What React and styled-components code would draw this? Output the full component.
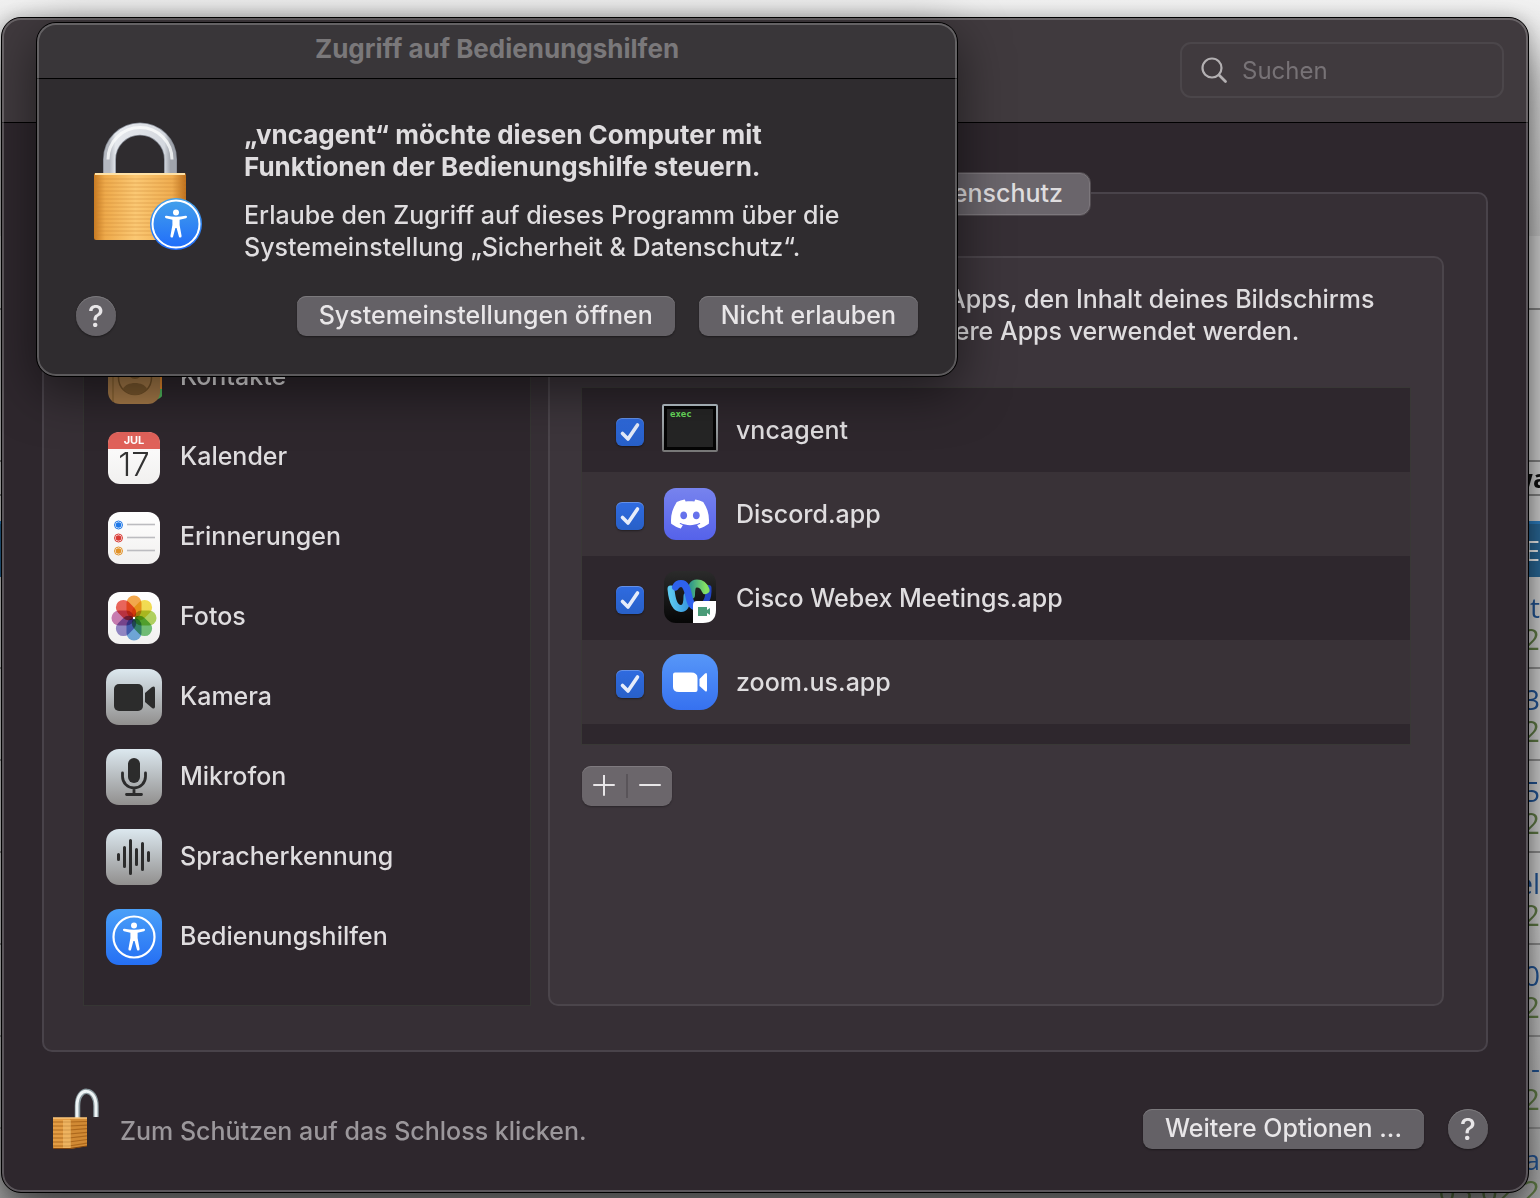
import React, { useState } from "react";
import styled, { createGlobalStyle } from "styled-components";
import { SiDiscord } from "react-icons/si";

const GlobalStyle = createGlobalStyle`
  * { box-sizing: border-box; }
  body {
    margin: 0;
    background: #dcdcdc;
    color: #dfdddf;
    font-family: Inter, "Liberation Sans", sans-serif;
    font-size: 25px;
    font-weight: 500;
    line-height: 32px;
  }
  button, input { font: inherit; color: inherit; }
  h1, h2, p, ul { margin: 0; padding: 0; }
  ul { list-style: none; }
  svg { display: block; }
`;

const Desktop = styled.div`
  position: relative;
  min-height: 100vh;
  overflow: hidden;
  padding: 17px 11px 5px 1px;
`;

/* ---------- page lying behind the windows ---------- */

const BackPage = styled.div`
  position: absolute;
  inset: 0;
  overflow: hidden;
  padding-top: 236px;
  background: linear-gradient(#f2f2f2 0, #cfcfcf 236px, #dedede 236px, #dedede 900px, #b4b4b4 100%);
  font-family: "Open Sans", "Noto Sans", sans-serif;
  font-size: 28px;
  text-align: right;
`;

const BackBand = styled.div`
  height: ${(p) => p.$height}px;
  margin-right: -8px;
  border-bottom: 2px solid #8a8a8a;
  color: #111;
  font-size: 25px;
  font-weight: 700;
`;

const BackSelected = styled.div`
  height: 56px;
  margin-top: 25px;
  padding-top: 10px;
  border-top: 3px solid #2f86cc;
  background: #2c6e9f;
  color: #fff;
`;

const BackRow = styled.div`
  display: flex;
  flex-direction: column;
  height: 92px;
  padding-top: 14px;
  border-bottom: 2px solid #959595;
  color: #24599c;
`;

const BackDate = styled.span`
  color: #66834a;
  font-size: 30px;
`;

/* ---------- preferences window ---------- */

const Window = styled.main`
  position: relative;
  display: flex;
  flex-direction: column;
  min-height: calc(100vh - 22px);
  border: 1px solid #000;
  border-radius: 20px;
  background: #2e272d;
  box-shadow: 0 30px 50px rgba(0, 0, 0, 0.6), 0 0 16px rgba(0, 0, 0, 0.2);
  overflow: clip;

  &::after {
    content: "";
    position: absolute;
    inset: 0;
    border: 2px solid rgba(255, 255, 255, 0.22);
    border-radius: 19px;
    pointer-events: none;
  }
`;

const Toolbar = styled.header`
  display: flex;
  justify-content: flex-end;
  height: 105px;
  padding: 24px;
  border-bottom: 1px solid #000;
  background: #403a3e;
`;

const Search = styled.label`
  display: flex;
  align-items: center;
  gap: 14px;
  width: 324px;
  height: 56px;
  padding: 0 18px;
  border: 2px solid #4b464a;
  border-radius: 11px;

  input {
    min-width: 0;
    flex: 1;
    padding: 2px 0 0;
    border: 0;
    outline: 0;
    background: transparent;
    font-size: 24px;
    font-weight: 400;
  }
  input::placeholder { color: #777276; opacity: 1; }
`;

const Content = styled.div`
  display: flex;
  flex: 1;
  flex-direction: column;
  padding: 49px 40px 36px;
`;

const Tabs = styled.nav`
  position: relative;
  display: flex;
  justify-content: flex-end;
  align-self: center;
  width: 652px;
  border: 1px solid #514b50;
  border-radius: 11px;
  background: #4a4449;
`;

const Tab = styled.button`
  height: 42px;
  padding: 0 26px 2px;
  border: 1px solid ${(p) => (p.$active ? "#7c777c" : "transparent")};
  border-radius: 10px;
  background: ${(p) => (p.$active ? "#6a656b" : "transparent")};
`;

const Panel = styled.section`
  display: flex;
  flex: 1;
  gap: 17px;
  margin-top: -24px;
  padding: 62px 42px 44px 39px;
  border: 2px solid #49434a;
  border-radius: 10px;
  background: #362f35;
`;

const Categories = styled.ul`
  display: flex;
  flex: 0 0 448px;
  flex-direction: column;
  justify-content: flex-end;
  padding-bottom: 28px;
  border: 1px solid #363634;
  background: #2e272d;
`;

const Category = styled.li`
  display: flex;
  align-items: center;
  gap: 18px;
  height: 80px;
  padding-left: 22px;
`;

const CategoryName = styled.span`
  padding-bottom: 2px;
`;

const Details = styled.div`
  flex: 1;
  min-width: 0;
  padding: 25px 32px;
  border: 2px solid #4b454b;
  border-radius: 10px;
  background: #3c353b;
`;

const Hint = styled.p`
  padding-left: 328px;
  text-indent: 38px;
`;

const AppList = styled.ul`
  margin-top: 41px;
  padding-bottom: 20px;
  outline: 1px solid #393836;
  background: #2e272d;
`;

const AppRow = styled.li`
  height: 84px;
  background: ${(p) => (p.$shaded ? "#393237" : "transparent")};

  label {
    display: flex;
    align-items: center;
    gap: 18px;
    height: 84px;
    padding-left: 34px;
  }
`;

const Tick = styled.span`
  display: grid;
  margin-top: 4px;

  input, svg { grid-area: 1 / 1; }
  svg { pointer-events: none; visibility: hidden; }
  input {
    width: 28px;
    height: 28px;
    margin: 0;
    appearance: none;
    border-radius: 6px;
    background: #5f5a60;
  }
  input:checked {
    background: linear-gradient(#2f6be0, #2860c8);
    box-shadow: inset 0 1px 0 rgba(255, 255, 255, 0.25), 0 1px 2px rgba(0, 0, 0, 0.4);
  }
  input:checked + svg { visibility: visible; }
`;

const Stepper = styled.div`
  display: flex;
  align-items: center;
  width: 90px;
  height: 40px;
  margin-top: 22px;
  border-radius: 9px;
  background: #6b666b;
  box-shadow: inset 0 1px 0 #7f7a7f, 0 1px 2px rgba(0, 0, 0, 0.3);
`;

const StepButton = styled.button`
  display: grid;
  place-items: center;
  flex: 1;
  height: 24px;
  padding: 0;
  border: 0;
  background: transparent;

  & + & { border-left: 2px solid #595459; }
`;

const Footer = styled.footer`
  display: flex;
  align-items: center;
  padding: 0 40px 40px 48px;
`;

const LockNote = styled.p`
  flex: 1;
  padding: 22px 0 0 18px;
  color: #9b979b;
`;

const PushButton = styled.button`
  height: 40px;
  padding: 0 22px 2px;
  border: 0;
  border-radius: 9px;
  background: #646166;
  box-shadow: inset 0 1px 0 #7b797c, 0 1px 2px rgba(0, 0, 0, 0.4);
  color: #e8e6e8;
`;

const HelpButton = styled.button`
  width: 40px;
  height: 40px;
  padding: 0;
  border: 0;
  border-radius: 50%;
  background: #646166;
  box-shadow: inset 0 1px 0 #7b797c, 0 1px 2px rgba(0, 0, 0, 0.4);
  color: #e8e6e8;
  font-size: 30px;
`;

const FooterActions = styled.div`
  display: flex;
  gap: 24px;
  padding-top: 18px;
`;

/* ---------- access dialog ---------- */

const Dialog = styled.div`
  position: absolute;
  top: 22px;
  left: 36px;
  width: 922px;
  max-width: calc(100vw - 48px);
  border: 1px solid #000;
  border-radius: 20px;
  background: #2f2c2f;
  box-shadow: 0 14px 50px rgba(0, 0, 0, 0.5);
  overflow: clip;

  &::after {
    content: "";
    position: absolute;
    inset: 0;
    border: 2px solid rgba(255, 255, 255, 0.22);
    border-radius: 19px;
    pointer-events: none;
  }
`;

const DialogTitle = styled.h1`
  height: 56px;
  padding-top: 10px;
  border-bottom: 1px solid #000;
  background: #393639;
  color: #7a787a;
  font-size: 26px;
  line-height: 32px;
  font-weight: 700;
  text-align: center;
`;

const DialogBody = styled.div`
  display: flex;
  gap: 38px;
  padding: 40px 40px 0 57px;
`;

const DialogText = styled.div`
  display: flex;
  flex: 1;
  flex-direction: column;
  gap: 16px;
`;

const DialogHeading = styled.h2`
  font-size: 26px;
  line-height: 32px;
  font-weight: 700;
`;

const DialogActions = styled.div`
  display: flex;
  gap: 24px;
  padding: 33px 39px 40px;

  ${HelpButton} { margin-right: auto; }
`;

/* ---------- drawings ---------- */

const Person = () => (
  <g>
    <circle cx="0" cy="-11.5" r="3" />
    <path d="M-11-7.7 Q-11.3-6 -10-5.8 L-3.6-4.3 L-3.6 1 L-5.6 12 Q-5.6 13.6 -4.3 13.6 Q-3.2 13.6 -2.9 12.4 L-.6 4 H.6 L2.9 12.4 Q3.2 13.6 4.3 13.6 Q5.6 13.6 5.6 12 L3.6 1 V-4.3 L10-5.8 Q11.3-6 11-7.7 Q10.5-8.5 9.5-8.2 Q0-6.2 -9.5-8.2 Q-10.5-8.5 -11-7.7Z" />
  </g>
);

const BigLock = () => (
  <svg width="112" height="132" viewBox="0 0 112 132" aria-hidden="true">
    <defs>
      <linearGradient id="shackle" x1="0" x2="1">
        <stop offset="0" stopColor="#b4b8c0" />
        <stop offset=".1" stopColor="#e4e7ec" />
        <stop offset=".5" stopColor="#dfe2e7" />
        <stop offset=".9" stopColor="#d3d7de" />
        <stop offset="1" stopColor="#a0a4ac" />
      </linearGradient>
      <linearGradient id="brass" x1="0" x2="1">
        <stop offset="0" stopColor="#c77a22" />
        <stop offset=".12" stopColor="#eeaa4b" />
        <stop offset=".45" stopColor="#fbc873" />
        <stop offset=".85" stopColor="#efad50" />
        <stop offset="1" stopColor="#bd6f1b" />
      </linearGradient>
      <linearGradient id="badge" x1="0" x2="0" y1="0" y2="1">
        <stop offset="0" stopColor="#45a3ea" />
        <stop offset="1" stopColor="#1f6bfb" />
      </linearGradient>
    </defs>
    <path d="M15.500 54V40.500A30.500 30.500 0 0 1 76.500 40.500V54" fill="none" stroke="#858a94" strokeWidth="13" />
    <path d="M15.500 54V40.500A30.500 30.500 0 0 1 76.500 40.500V54" fill="none" stroke="url(#shackle)" strokeWidth="11.500" />
    <path d="M14 40.500A32 32 0 0 1 78 40.500" fill="none" stroke="#fbfcfd" strokeWidth="3" opacity=".8" />
    <rect x="0" y="54" width="92" height="67" rx="2" fill="url(#brass)" />
    {Array.from({ length: 15 }, (_, i) => (
      <path key={i} d={`M0 ${60 + i * 4}H92`} stroke="#c98534" strokeOpacity=".4" />
    ))}
    <path d="M1 55H91" stroke="#ffe2a6" strokeWidth="2" />
    <circle cx="82" cy="105" r="26" fill="url(#badge)" />
    <circle cx="82" cy="105" r="23.500" fill="none" stroke="#fff" strokeWidth="2" />
    <g transform="translate(82 105)" fill="#fff"><Person /></g>
  </svg>
);

const SmallLock = () => (
  <svg width="52" height="64" viewBox="0 0 52 64" aria-hidden="true">
    <g transform="translate(1 -1)">
      <path d="M26.500 35V19C26.500 -1 45 0 45 19V30" fill="none" stroke="#87979c" strokeWidth="5.500" />
      <path d="M26 35V19C26 -1 45 0 45 19V30" fill="none" stroke="#eef4f5" strokeWidth="3" />
      <path d="M2 31H19V62H4Q2 62 2 60Z" fill="#e39c43" />
      <path d="M19 31H36V59L19 62Z" fill="#d18a34" />
      {Array.from({ length: 7 }, (_, i) => (
        <path key={i} d={`M2 ${35 + i * 4}H18L36 ${34.5 + i * 3.6}`} fill="none" stroke="#9f5c16" strokeWidth="1.200" opacity=".75" />
      ))}
      <path d="M12 33H20V61H12Z" fill="#ffd68a" opacity=".4" />
      <path d="M2 31H36" stroke="#fbc679" strokeWidth="1.500" />
      <path d="M2 61.500H19L36 59" fill="none" stroke="#7c420d" />
    </g>
  </svg>
);

const SearchIcon = () => (
  <svg width="28" height="28" viewBox="0 0 28 28" fill="none" stroke="#b3b0b2" strokeWidth="2.200" strokeLinecap="round" aria-hidden="true">
    <circle cx="12" cy="12" r="9.500" />
    <path d="M19 19L25.500 25.500" strokeWidth="2.800" />
  </svg>
);

const IconBox = ({ children }) => (
  <svg width="56" height="56" viewBox="0 0 56 56" aria-hidden="true">{children}</svg>
);

const Gradient = ({ id, from, to }) => (
  <linearGradient id={id} x1="0" x2="0" y1="0" y2="1">
    <stop offset="0" stopColor={from} />
    <stop offset="1" stopColor={to} />
  </linearGradient>
);

const Silver = ({ id, children }) => (
  <IconBox>
    <defs><Gradient id={id} from="#dce8ef" to="#918f8e" /></defs>
    <rect width="56" height="56" rx="13" fill={`url(#${id})`} />
    {children}
  </IconBox>
);

const White = ({ id, children }) => (
  <IconBox>
    <defs><Gradient id={id} from="#fff" to="#f1f0ef" /></defs>
    <rect x="2" y="3" width="52" height="52" rx="12" fill={`url(#${id})`} />
    {children}
  </IconBox>
);

const ContactsIcon = () => (
  <IconBox>
    <rect x="42" y="5" width="15" height="14" rx="3" fill="#e2e2e2" />
    <rect x="42" y="16" width="15" height="14" fill="#59a9dc" />
    <rect x="42" y="28" width="15" height="12" fill="#e58a2e" />
    <path d="M42 40H57V44Q57 49 50 51H42Z" fill="#50b85c" />
    <rect x="2" y="3" width="52" height="52" rx="12" fill="#a77b49" />
    <path d="M7 5V53" stroke="#85602f" strokeOpacity=".6" strokeWidth="2" />
    <circle cx="29" cy="29" r="16.500" fill="none" stroke="#755329" strokeWidth="1.500" />
    <circle cx="29" cy="23" r="7" fill="#7c592e" />
    <path d="M17 40C20 32 38 32 41 40Q35 46 29 46T17 40Z" fill="#7c592e" />
  </IconBox>
);

const CalendarIcon = () => (
  <White id="calendar">
    <path d="M2 20V15Q2 3 14 3H42Q54 3 54 15V20Z" fill="#e0625a" />
    <text x="28" y="15" textAnchor="middle" fontSize="11" fontWeight="700" fill="#fff">JUL</text>
    <text x="28" y="47" textAnchor="middle" fontSize="33" fontWeight="300" fill="#333">17</text>
  </White>
);

const RemindersIcon = () => (
  <White id="reminders">
    {[["#1f78e8", 16], ["#d93a34", 29], ["#e29228", 42]].map(([color, y]) => (
      <g key={y}>
        <circle cx="12.500" cy={y} r="2.800" fill={color} />
        <circle cx="12.500" cy={y} r="4" fill="none" stroke={color} />
        <path d={`M21 ${y - 0.5}H49`} stroke="#bcbcc0" strokeWidth="1.600" />
      </g>
    ))}
  </White>
);

const PETALS = ["#f39a2e", "#f2d935", "#a7cf45", "#5dba63", "#5b9fdd", "#8577c2", "#c36aa8", "#e94b3f"];

const PhotosIcon = () => (
  <White id="photos">
    {PETALS.map((color, i) => (
      <rect key={color} x="20.500" y="6.500" width="15" height="22.500" rx="7.500" fill={color} fillOpacity=".85"
        transform={`rotate(${i * 45} 28 29)`} style={{ mixBlendMode: "multiply" }} />
    ))}
    <circle cx="28" cy="29" r="1.200" fill="#fff" />
  </White>
);

const CameraIcon = () => (
  <Silver id="camera">
    <g fill="#2c2c2c">
      <rect x="8" y="15" width="29" height="27" rx="5" />
      <path d="M39 24L46 18Q49 16.500 49 19.500V37.500Q49 40.500 46 39L39 33Z" />
    </g>
  </Silver>
);

const MicrophoneIcon = () => (
  <Silver id="microphone">
    <rect x="22" y="9" width="12" height="25" rx="6" fill="#2c2c2c" />
    <path d="M16.500 24V27.500A11.500 11.500 0 0 0 39.500 27.500V24M28 39V45M20.500 45.500H35.500" fill="none" stroke="#2c2c2c" strokeWidth="2.800" strokeLinecap="round" />
  </Silver>
);

const SpeechIcon = () => (
  <Silver id="speech">
    <path d="M12.500 25.500V30.500M18.500 18.500V37.500M24.500 11.500V44.500M30.500 20.500V35.500M36.500 14.500V40.500M42.500 23.500V31.500" stroke="#2c2c2c" strokeWidth="3" strokeLinecap="round" />
  </Silver>
);

const AccessibilityIcon = () => (
  <IconBox>
    <defs><Gradient id="access" from="#4aa0f8" to="#256ff4" /></defs>
    <rect width="56" height="56" rx="13" fill="url(#access)" />
    <circle cx="28" cy="28" r="20.500" fill="none" stroke="#fff" strokeWidth="2.200" />
    <g transform="translate(28 28)" fill="#fff"><Person /></g>
  </IconBox>
);

const ExecIcon = () => (
  <IconBox>
    <defs><Gradient id="frame" from="#bcc8cf" to="#777" /></defs>
    <rect y="2" width="56" height="48" rx="2" fill="url(#frame)" />
    <rect x="2" y="4" width="52" height="44" fill="#050505" />
    <rect x="5" y="7" width="46" height="38" fill="#252525" />
    <text x="8" y="15" fontFamily="DejaVu Sans Mono, monospace" fontSize="9" fontWeight="700" fill="#6be05f">exec</text>
  </IconBox>
);

const DiscordIcon = () => (
  <IconBox>
    <defs><Gradient id="discord" from="#7783ee" to="#5562ea" /></defs>
    <rect x="2" y="2" width="52" height="52" rx="12" fill="url(#discord)" />
    <SiDiscord x="9" y="9" size="38" color="#fff" />
  </IconBox>
);

const WebexIcon = () => (
  <IconBox>
    <defs>
      <Gradient id="webex" from="#2b2b2b" to="#060606" />
      <linearGradient id="webexCyan" x1="0" x2="1">
        <stop offset="0" stopColor="#5cc8ef" />
        <stop offset="1" stopColor="#3a9be0" />
      </linearGradient>
      <linearGradient id="webexGreen" x1="0" x2="1">
        <stop offset="0" stopColor="#329a8b" />
        <stop offset="1" stopColor="#84e064" />
      </linearGradient>
    </defs>
    <rect x="2" y="1" width="52" height="52" rx="12" fill="url(#webex)" />
    <g fill="none" strokeWidth="8" strokeLinecap="round">
      <path d="M46.500 18C47 29 43 36 37 36" stroke="#2346c4" strokeWidth="6" />
      <path d="M29 25C29 16 31 13.500 35 13.500C40 13.500 42 16 43.500 20" stroke="url(#webexGreen)" />
      <path d="M9 19C10 30 13 38.500 19 38.500C24 38.500 25 31 25 26" stroke="url(#webexCyan)" strokeWidth="7" />
      <path d="M13.500 17C15 14 17 13.500 19 13.500C29 13.500 24 36 34 37" stroke="#2e62ed" strokeWidth="7" />
    </g>
    <path d="M31 53V35Q31 31 35 31H54V40Q54 53 41 53Z" fill="#fff" />
    <path d="M36 37H45V40L48 38V45L45 43V46H36Z" fill="#4a9c78" />
  </IconBox>
);

const ZoomIcon = () => (
  <IconBox>
    <defs><Gradient id="zoom" from="#5797f8" to="#3671f0" /></defs>
    <rect width="56" height="56" rx="18" fill="url(#zoom)" />
    <path d="M11 20.500Q11 18.500 13 18.500H29Q35.500 18.500 35.500 24V36Q35.500 38 33.500 38H17Q11 38 11 33Z" fill="#fff" />
    <path d="M37.500 25L43 19.500Q45 18 45 20.500V36Q45 38.500 43 37L37.500 32Z" fill="#fff" />
  </IconBox>
);

const CATEGORIES = [
  ["Kontakte", ContactsIcon],
  ["Kalender", CalendarIcon],
  ["Erinnerungen", RemindersIcon],
  ["Fotos", PhotosIcon],
  ["Kamera", CameraIcon],
  ["Mikrofon", MicrophoneIcon],
  ["Spracherkennung", SpeechIcon],
  ["Bedienungshilfen", AccessibilityIcon],
];

const APPS = [
  ["vncagent", ExecIcon],
  ["Discord.app", DiscordIcon],
  ["Cisco Webex Meetings.app", WebexIcon],
  ["zoom.us.app", ZoomIcon],
];

const BACK_ROWS = ["2t", "3", "a5", "el", "00", "-", "a"];

function AppEntry({ name, icon: Icon, shaded }) {
  const [allowed, setAllowed] = useState(true);
  return (
    <AppRow $shaded={shaded}>
      <label>
        <Tick>
          <input type="checkbox" checked={allowed} onChange={(e) => setAllowed(e.target.checked)} />
          <svg width="28" height="28" viewBox="0 0 28 28" fill="none" stroke="#e6ecfa" strokeWidth="3.600" strokeLinecap="round" strokeLinejoin="round">
            <path d="M6.500 15.500L12 21L21.500 7" />
          </svg>
        </Tick>
        <Icon />
        {name}
      </label>
    </AppRow>
  );
}

export default function App() {
  return (
    <Desktop>
      <GlobalStyle />
      <BackPage aria-hidden="true">
        <BackBand $height={74} />
        <BackBand $height={152} />
        <BackBand $height={34}>wa</BackBand>
        <BackSelected>BE</BackSelected>
        {BACK_ROWS.map((text) => (
          <BackRow key={text}>
            {text}
            <BackDate>03.02.2</BackDate>
          </BackRow>
        ))}
      </BackPage>

      <Window>
        <Toolbar>
          <Search>
            <SearchIcon />
            <input type="search" placeholder="Suchen" aria-label="Suchen" />
          </Search>
        </Toolbar>
        <Content>
          <Tabs>
            <Tab type="button" $active>Datenschutz</Tab>
          </Tabs>
          <Panel>
            <Categories>
              {CATEGORIES.map(([name, Icon]) => (
                <Category key={name}>
                  <Icon />
                  <CategoryName>{name}</CategoryName>
                </Category>
              ))}
            </Categories>
            <Details>
              <Hint>
                Apps, den Inhalt deines Bildschirms<br />
                andere Apps verwendet werden.
              </Hint>
              <AppList>
                {APPS.map(([name, icon], i) => (
                  <AppEntry key={name} name={name} icon={icon} shaded={i % 2 === 1} />
                ))}
              </AppList>
              <Stepper>
                <StepButton type="button" aria-label="Hinzufügen">
                  <svg width="22" height="22" viewBox="0 0 22 22" stroke="#e8e6e8" strokeWidth="2" strokeLinecap="round"><path d="M1 10H21M11 0V20" /></svg>
                </StepButton>
                <StepButton type="button" aria-label="Entfernen">
                  <svg width="22" height="22" viewBox="0 0 22 22" stroke="#e8e6e8" strokeWidth="2" strokeLinecap="round"><path d="M1 10H21" /></svg>
                </StepButton>
              </Stepper>
            </Details>
          </Panel>
        </Content>
        <Footer>
          <SmallLock />
          <LockNote>Zum Schützen auf das Schloss klicken.</LockNote>
          <FooterActions>
            <PushButton type="button">Weitere Optionen ...</PushButton>
            <HelpButton type="button" aria-label="Hilfe">?</HelpButton>
          </FooterActions>
        </Footer>
      </Window>

      <Dialog role="dialog" aria-labelledby="dialog-title">
        <DialogTitle id="dialog-title">Zugriff auf Bedienungshilfen</DialogTitle>
        <DialogBody>
          <BigLock />
          <DialogText>
            <DialogHeading>
              „vncagent“ möchte diesen Computer mit<br />
              Funktionen der Bedienungshilfe steuern.
            </DialogHeading>
            <p>
              Erlaube den Zugriff auf dieses Programm über die<br />
              Systemeinstellung „Sicherheit &amp; Datenschutz“.
            </p>
          </DialogText>
        </DialogBody>
        <DialogActions>
          <HelpButton type="button" aria-label="Hilfe">?</HelpButton>
          <PushButton type="button">Systemeinstellungen öffnen</PushButton>
          <PushButton type="button">Nicht erlauben</PushButton>
        </DialogActions>
      </Dialog>
    </Desktop>
  );
}
